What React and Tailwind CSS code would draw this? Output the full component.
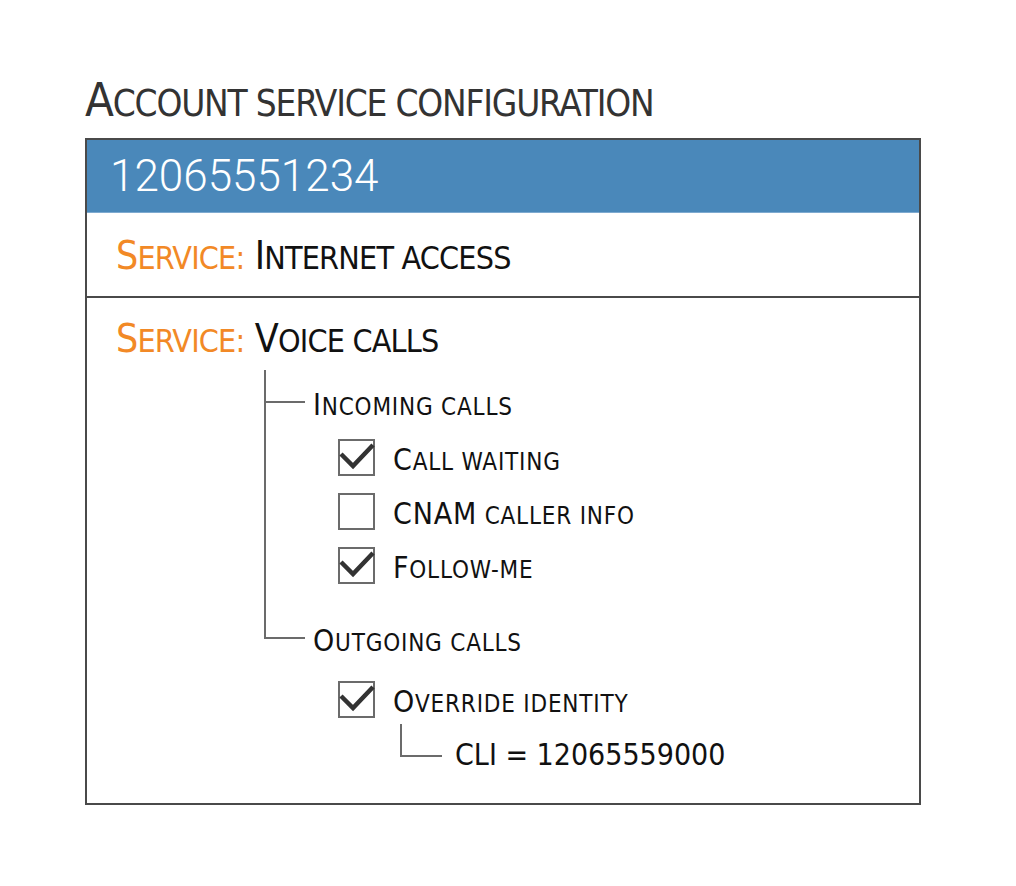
import React from 'react';

const titleFont = "font-['Liberation_Sans_Narrow','DejaVu_Sans_Condensed','Liberation_Sans',sans-serif]";
const treeFont = "font-['DejaVu_Sans_Condensed','DejaVu_Sans',sans-serif]";

// fake small caps: capitals stay big, the rest is upper-cased at a smaller size
const Caps = ({ text, small }) => {
    const parts = text.match(/[A-Z]+|[^A-Z]+/g) || [];
    return parts.map((p, i) =>
        /[A-Z]/.test(p[0]) ? <span key={i}>{p}</span> : <span key={i} className={`leading-none ${small}`}>{p.toUpperCase()}</span>
    );
};

const Check = ({ checked }) => (
    <div className="w-[37px] h-[37px] border-2 border-[#6b6b6b] bg-white shrink-0">
        {checked && (
            <svg width="37" height="37" viewBox="0 0 37 37" className="-mt-[2px] -ml-[2px] overflow-visible">
                <path d="M3 15 L15 27 L35 6" fill="none" stroke="#333" strokeWidth="4.5" strokeLinejoin="miter" />
            </svg>
        )}
    </div>
);

const TreeText = ({ text, className = '' }) => (
    <span className={`pt-[5px] text-[30px] leading-[40px] tracking-[0.8px] text-[#111] ${treeFont} ${className}`}>
        <Caps text={text} small="text-[0.8em]" />
    </span>
);

const Option = ({ checked, label }) => (
    <div className="flex items-center h-[37px]">
        <Check checked={checked} />
        <TreeText text={label} className="ml-[18px]" />
    </div>
);

const Service = ({ name }) => (
    <div className={`h-[44px] text-[39px] leading-[44px] tracking-[-0.8px] ${titleFont}`}>
        <span className="text-[#f28926]"><Caps text="Service:" small="text-[0.82em]" /></span>{' '}
        <span className="text-[#111]"><Caps text={name} small="text-[0.82em]" /></span>
    </div>
);

export default function App() {
    return (
        <div className="w-[1016px] h-[886px] bg-white pl-[85px] pt-[72px]">
            <h1 className={`h-[56px] text-[47px] leading-[56px] tracking-[-1.2px] text-[#333] ${titleFont}`}>
                <Caps text="Account service configuration" small="text-[0.78em]" />
            </h1>

            <div className="mt-[10px] w-[836px] border-2 border-[#4a4a4a]">
                <div className="h-[73px] bg-[#4a88ba] border-b border-[#7eaad0] flex items-center pl-[23px]">
                    <span className="text-[44px] font-light text-white font-['Roboto','Liberation_Sans',sans-serif]">12065551234</span>
                </div>

                <div className="h-[85px] flex items-center pl-[29px] pt-[2px] border-b-2 border-[#4a4a4a]">
                    <Service name="Internet access" />
                </div>

                <div className="pl-[29px] pt-[19px] pb-[28px]">
                    <Service name="Voice calls" />

                    <div className="ml-[148px] mt-[9px]">
                        <div className="border-l-2 border-[#6b6b6b] pt-[12px] pb-[34px]">
                            <div className="flex items-center h-[40px]">
                                <div className="w-[39px] h-[2px] bg-[#6b6b6b]" />
                                <TreeText text="Incoming calls" className="ml-[8px]" />
                            </div>
                            <div className="mt-[17px] pl-[72px] flex flex-col gap-[17px]">
                                <Option checked label="Call waiting" />
                                <Option label="CNAM caller info" />
                                <Option checked label="Follow-me" />
                            </div>
                        </div>
                        <div className="flex items-center h-[40px]">
                            <div className="self-start w-[41px] h-[21px] border-l-2 border-b-2 border-[#6b6b6b]" />
                            <TreeText text="Outgoing calls" className="ml-[8px]" />
                        </div>

                        <div className="mt-[23px] pl-[74px]">
                            <Option checked label="Override identity" />
                            <div className="mt-[6px] ml-[62px] flex items-start">
                                <div className="w-[42px] h-[33px] border-l-2 border-b-2 border-[#6b6b6b]" />
                                <span className={`ml-[13px] mt-[11px] text-[30px] leading-[40px] text-[#111] ${treeFont}`}>CLI = 12065559000</span>
                            </div>
                        </div>
                    </div>
                </div>
            </div>
        </div>
    );
}
